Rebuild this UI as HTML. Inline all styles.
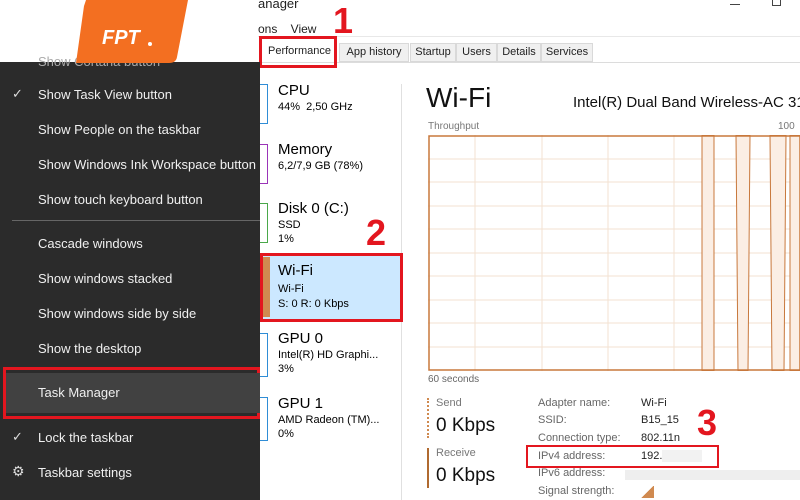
<!DOCTYPE html>
<html><head><meta charset="utf-8"><style>
*{margin:0;padding:0;box-sizing:border-box}
body{width:800px;height:500px;overflow:hidden;background:#fff;font-family:"Liberation Sans",sans-serif;position:relative}
.a{position:absolute;white-space:nowrap}
.menu{position:absolute;left:0;top:62px;width:260px;height:438px;background:#2b2b2b;color:#f0f0f0;font-size:13px}
.mi{position:absolute;left:38px}
.tab{position:absolute;top:43px;height:19px;border:1px solid #d9d9d9;background:#f0f0f0;font-size:11px;padding:2px 0;text-align:center;color:#222}
.red{color:#e3161f;font-weight:bold;font-size:36px;position:absolute}
.lab{font-size:11px;color:#666;position:absolute}
.val{font-size:11px;color:#222;position:absolute}
</style></head><body>
<div class="a" style="left:258px;top:-4px;font-size:13px;color:#222">anager</div>
<div class="a" style="left:258px;top:22px;font-size:12px;color:#222">ons&nbsp;&nbsp;&nbsp;&nbsp;View</div>
<div class="a" style="left:730px;top:4px;width:10px;height:1px;background:#444"></div>
<div class="a" style="left:772px;top:-3px;width:9px;height:9px;border:1px solid #444"></div>
<div class="a" style="left:258px;top:36px;width:542px;height:1px;background:#e8e8e8"></div>
<div class="tab" style="left:262px;width:75px;background:#fff;border:none">Performance</div>
<div class="tab" style="left:339px;width:70px">App history</div>
<div class="tab" style="left:410px;width:46px">Startup</div>
<div class="tab" style="left:456px;width:41px">Users</div>
<div class="tab" style="left:497px;width:44px">Details</div>
<div class="tab" style="left:541px;width:52px">Services</div>
<div class="a" style="left:258px;top:62px;width:542px;height:1px;background:#dcdcdc"></div>
<div class="a" style="left:259px;top:36px;width:78px;height:32px;border:3px solid #e3161f"></div>
<div class="red" style="left:333px;top:0px">1</div>
<div class="a" style="left:401px;top:84px;width:1px;height:416px;background:#e0e0e0"></div>
<div class="a" style="left:260px;top:84px;width:8px;height:40px;border:1px solid #2f8dd6;border-left:none"></div>
<div class="a" style="left:278px;top:82px;font-size:15px">CPU</div>
<div class="a" style="left:278px;top:101px;font-size:11px">44%&nbsp; 2,50 GHz</div>
<div class="a" style="left:260px;top:144px;width:8px;height:40px;border:1px solid #9b34b8;border-left:none"></div>
<div class="a" style="left:278px;top:141px;font-size:15px">Memory</div>
<div class="a" style="left:278px;top:160px;font-size:11px">6,2/7,9 GB (78%)</div>
<div class="a" style="left:260px;top:203px;width:8px;height:40px;border:1px solid #4aa84a;border-left:none"></div>
<div class="a" style="left:278px;top:200px;font-size:15px">Disk 0 (C:)</div>
<div class="a" style="left:278px;top:219px;font-size:11px">SSD</div>
<div class="a" style="left:278px;top:233px;font-size:11px">1%</div>
<div class="red" style="left:366px;top:212px">2</div>
<div class="a" style="left:260px;top:253px;width:143px;height:69px;background:#cce8ff;border:3px solid #e3161f"></div>
<div class="a" style="left:263px;top:257px;width:7px;height:60px;background:#d08a50"></div>
<div class="a" style="left:278px;top:262px;font-size:15px">Wi-Fi</div>
<div class="a" style="left:278px;top:283px;font-size:11px">Wi-Fi</div>
<div class="a" style="left:278px;top:298px;font-size:11px">S: 0 R: 0 Kbps</div>
<div class="a" style="left:260px;top:333px;width:8px;height:44px;border:1px solid #2f8dd6;border-left:none"></div>
<div class="a" style="left:278px;top:330px;font-size:15px">GPU 0</div>
<div class="a" style="left:278px;top:349px;font-size:11px">Intel(R) HD Graphi...</div>
<div class="a" style="left:278px;top:363px;font-size:11px">3%</div>
<div class="a" style="left:260px;top:397px;width:8px;height:44px;border:1px solid #2f8dd6;border-left:none"></div>
<div class="a" style="left:278px;top:395px;font-size:15px">GPU 1</div>
<div class="a" style="left:278px;top:414px;font-size:11px">AMD Radeon (TM)...</div>
<div class="a" style="left:278px;top:428px;font-size:11px">0%</div>
<div class="a" style="left:426px;top:82px;font-size:28px;color:#111">Wi-Fi</div>
<div class="a" style="left:573px;top:94px;font-size:15px;color:#111">Intel(R) Dual Band Wireless-AC 31</div>
<div class="a" style="left:428px;top:121px;font-size:10px;color:#777">Throughput</div>
<div class="a" style="left:778px;top:121px;font-size:10px;color:#777">100</div>
<svg class="a" style="left:428px;top:135px" width="372" height="236">
<g stroke="#f3e2d2" stroke-width="1">
<line x1="47" y1="0" x2="47" y2="236"/><line x1="114" y1="0" x2="114" y2="236"/><line x1="180" y1="0" x2="180" y2="236"/><line x1="246" y1="0" x2="246" y2="236"/><line x1="312" y1="0" x2="312" y2="236"/>
<line x1="0" y1="24" x2="372" y2="24"/><line x1="0" y1="47" x2="372" y2="47"/><line x1="0" y1="71" x2="372" y2="71"/><line x1="0" y1="94" x2="372" y2="94"/><line x1="0" y1="118" x2="372" y2="118"/><line x1="0" y1="141" x2="372" y2="141"/><line x1="0" y1="165" x2="372" y2="165"/><line x1="0" y1="188" x2="372" y2="188"/><line x1="0" y1="212" x2="372" y2="212"/>
</g>
<g fill="#fbeee4" stroke="#c8783c" stroke-width="1">
<path d="M274 0 L286 0 L286 236 L274 236 Z"/><path d="M308 0 L322 0 L320 236 L310 236 Z"/><path d="M342 0 L358 0 L356 236 L344 236 Z"/><path d="M362 0 L372 0 L372 236 L362 236 Z"/>
</g>
<rect x="1" y="1" width="371" height="234" fill="none" stroke="#c8783c" stroke-width="1.5"/>
</svg>
<div class="a" style="left:428px;top:374px;font-size:10px;color:#666">60 seconds</div>
<div class="a" style="left:427px;top:398px;height:40px;border-left:2px dotted #d08a50"></div>
<div class="a" style="left:436px;top:397px;font-size:11px;color:#777">Send</div>
<div class="a" style="left:436px;top:415px;font-size:19px;color:#111">0 Kbps</div>
<div class="a" style="left:427px;top:448px;width:2px;height:40px;background:#b06a30"></div>
<div class="a" style="left:436px;top:447px;font-size:11px;color:#777">Receive</div>
<div class="a" style="left:436px;top:465px;font-size:19px;color:#111">0 Kbps</div>
<div class="lab" style="left:538px;top:397px">Adapter name:</div><div class="val" style="left:641px;top:397px">Wi-Fi</div>
<div class="lab" style="left:538px;top:414px">SSID:</div><div class="val" style="left:641px;top:414px">B15_15</div>
<div class="lab" style="left:538px;top:432px">Connection type:</div><div class="val" style="left:641px;top:432px">802.11n</div>
<div class="lab" style="left:538px;top:450px">IPv4 address:</div><div class="val" style="left:641px;top:450px">192.</div>
<div class="a" style="left:662px;top:450px;width:40px;height:12px;background:#f2f2f2"></div>
<div class="a" style="left:526px;top:445px;width:193px;height:23px;border:2px solid #e3161f"></div>
<div class="lab" style="left:538px;top:467px">IPv6 address:</div>
<div class="a" style="left:625px;top:470px;width:175px;height:10px;background:#eee"></div>
<div class="lab" style="left:538px;top:485px">Signal strength:</div>
<div class="a" style="left:640px;top:486px;width:14px;height:12px;background:linear-gradient(135deg,transparent 50%,#d08a50 50%)"></div>
<div class="red" style="left:697px;top:402px">3</div>
<div class="menu">
<div class="mi" style="top:-8px;color:#aaa">Show Cortana button</div>
<div class="a" style="left:12px;top:24px;color:#ddd">✓</div>
<div class="mi" style="top:25px">Show Task View button</div>
<div class="mi" style="top:60px">Show People on the taskbar</div>
<div class="mi" style="top:95px">Show Windows Ink Workspace button</div>
<div class="mi" style="top:130px">Show touch keyboard button</div>
<div class="a" style="left:12px;top:158px;width:248px;height:1px;background:#666"></div>
<div class="mi" style="top:174px">Cascade windows</div>
<div class="mi" style="top:209px">Show windows stacked</div>
<div class="mi" style="top:244px">Show windows side by side</div>
<div class="mi" style="top:279px">Show the desktop</div>
<div class="a" style="left:3px;top:305px;width:257px;height:52px;border:3px solid #e3161f;background:#2b2b2b"></div>
<div class="a" style="left:6px;top:311px;width:254px;height:40px;background:#414141"></div>
<div class="mi" style="top:323px">Task Manager</div>
<div class="a" style="left:12px;top:367px;color:#ddd">✓</div>
<div class="mi" style="top:368px">Lock the taskbar</div>
<div class="a" style="left:12px;top:401px;color:#ddd;font-size:14px">⚙</div>
<div class="mi" style="top:403px">Taskbar settings</div>
</div>
<svg class="a" style="left:72px;top:0;z-index:5" width="116" height="64"><path d="M14 0 H116 L105 57 Q104 63 97 63 H4 L12 6 Z" fill="#f36f21"/>
<text x="30" y="44" font-family="Liberation Sans" font-weight="bold" font-style="italic" font-size="20" fill="#fff">FPT</text><circle cx="78" cy="44" r="2" fill="#fff"/></svg>
</body></html>
